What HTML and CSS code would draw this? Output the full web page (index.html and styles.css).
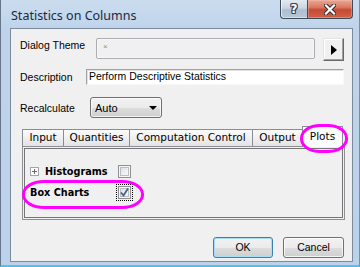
FILE: index.html
```html
<!DOCTYPE html>
<html>
<head>
<meta charset="utf-8">
<link rel="stylesheet" href="styles.css">
</head>
<body>
<div class="window">
  <div class="titlebar">
    <span class="title">Statistics on Columns</span>
    <div class="caption">
      <div class="cbtn help"><span class="q">?</span></div>
      <div class="cbtn close">
        <svg width="12" height="11" viewBox="0 0 12 11"><path d="M2 1.5 L10 9.5 M10 1.5 L2 9.5" stroke="#3a2a2a" stroke-width="4.2" stroke-linecap="square" fill="none"/><path d="M2 1.5 L10 9.5 M10 1.5 L2 9.5" stroke="#ffffff" stroke-width="2.2" stroke-linecap="square" fill="none"/></svg>
      </div>
    </div>
  </div>
  <div class="client">
    <div class="row r1">
      <span class="lbl w-theme">Dialog Theme</span>
      <div class="theme-box"><span class="x">×</span></div>
      <div class="arrow-btn"><svg width="6" height="10" viewBox="0 0 6 10"><path d="M0 0 L6 5 L0 10 Z" fill="#000"/></svg></div>
    </div>
    <div class="row r2">
      <span class="lbl w-desc">Description</span>
      <div class="desc-box">Perform Descriptive Statistics</div>
    </div>
    <div class="row r3">
      <span class="lbl w-recalc">Recalculate</span>
      <div class="combo"><span>Auto</span><svg width="8" height="4" viewBox="0 0 8 4"><path d="M0 0 L8 0 L4 4 Z" fill="#000"/></svg></div>
    </div>
    <div class="tabs">
      <div class="tab t-input">Input</div>
      <div class="tab t-quant">Quantities</div>
      <div class="tab t-comp">Computation Control</div>
      <div class="tab t-out">Output</div>
      <div class="tab sel t-plots">Plots</div>
    </div>
    <div class="panel">
      <div class="panel-inner">
        <div class="opt o1">
          <span class="expander"><svg width="9" height="9" viewBox="0 0 9 9"><rect x="0.5" y="0.5" width="8" height="8" fill="#fdfdfd" stroke="#a5a5a5"/><path d="M2 4.5 H7 M4.5 2 V7" stroke="#6d6d6d" stroke-width="1"/></svg></span>
          <span class="opt-lbl w-hist">Histograms</span>
          <span class="chk"></span>
        </div>
        <div class="opt o2">
          <span class="opt-lbl w-box">Box Charts</span>
          <span class="chk checked"><svg width="11" height="11" viewBox="0 0 11 11"><path d="M2 5.5 L4.5 8.5 L9 1.5" stroke="#4a5f8f" stroke-width="1.8" fill="none"/></svg></span>
        </div>
      </div>
    </div>
    <div class="buttons">
      <div class="btn ok">OK</div>
      <div class="btn cancel">Cancel</div>
    </div>
  </div>
  <div class="mark mark-plots"></div>
  <div class="mark mark-box"></div>
</div>
</body>
</html>
```
FILE: styles.css
```css
* { box-sizing: border-box; }
html, body { margin: 0; padding: 0; }
body {
  width: 360px; height: 267px; overflow: hidden;
  font-family: "Liberation Sans", Arial, sans-serif;
  font-size: 10.5px; color: #000;
  background: #bcd2ea;
}
.window {
  position: relative;
  width: 360px; height: 267px;
  background: linear-gradient(#cbdcef 0, #bfd4eb 28px, #bcd2ea 100%);
  border-left: 1px solid #66768a;
  border-right: 1px solid #7d8da0;
  border-bottom: 2px solid #4cc4f0;
  display: flex; flex-direction: column;
}
.titlebar {
  height: 28px; flex: none;
  display: flex; align-items: flex-start;
  padding-left: 10px;
}
.title {
  font-family: "Noto Sans", sans-serif;
  font-size: 12.5px; line-height: 17px;
  padding-top: 7px;
  color: #1b2940;
}
.caption { margin-left: auto; margin-right: 6px; display: flex; height: 19px; }
.cbtn {
  height: 19px; display: flex; align-items: center; justify-content: center;
  border: 1px solid #3f4c5c; border-top: none;
}
.help {
  width: 27px;
  border-bottom-left-radius: 4px;
  border-right: none;
  background: linear-gradient(#e2e9f1 0, #c9d5e2 45%, #aebdcf 55%, #b9c8d9 100%);
  box-shadow: inset 1px 0 0 rgba(255,255,255,.6), inset 0 -1px 0 rgba(255,255,255,.4);
}
.q {
  font-family: "DejaVu Sans", sans-serif; font-weight: bold; font-size: 12px; line-height: 12px;
  color: #fff;
  text-shadow: -1px 0 0 #3d4654, 1px 0 0 #3d4654, 0 -1px 0 #3d4654, 0 1px 0 #3d4654, 1px 1px 0 #3d4654, -1px -1px 0 #3d4654, 1px -1px 0 #3d4654, -1px 1px 0 #3d4654;
}
.close {
  width: 46px;
  border-bottom-right-radius: 4px;
  background: linear-gradient(#e9a895 0, #d97a62 40%, #c64a33 55%, #d0614a 100%);
  box-shadow: inset 0 0 0 1px rgba(255,200,190,.35);
}
.client {
  margin-left: 9px;
  width: 343px; height: 234px; flex: none;
  border: 1px solid #7b8a9c;
  background: #f0f0f0;
  display: flex; flex-direction: column;
}
.row { display: flex; padding-left: 9px; flex: none; }
.lbl { line-height: 14px; white-space: nowrap; flex: none; }
.r1 { margin-top: 9px; height: 23px; align-items: flex-start; }
.r2 { margin-top: 8px; height: 16px; align-items: center; }
.r3 { margin-top: 12px; height: 21px; align-items: center; }
.w-theme { width: 76px; }
.w-desc { width: 66px; }
.w-recalc { width: 70px; }
.theme-box {
  width: 219px; height: 21px;
  border: 1px solid #abadb3; border-radius: 2px;
  background: #f0f0f0;
  box-shadow: inset 0 0 0 1px #f7f7f7;
  padding-left: 6px;
  display: flex; align-items: center;
}
.x { font-size: 8px; color: #8a8a8a; line-height: 8px; margin-top: -4px; }
.arrow-btn {
  margin-left: 8px; width: 21px; height: 23px;
  background: #f0f0f0;
  border: 1px solid; border-color: #e3e3e3 #696969 #696969 #e3e3e3;
  box-shadow: inset -1px -1px 0 #a0a0a0, inset 1px 1px 0 #fff;
  display: flex; align-items: center; justify-content: center;
  padding-left: 1px;
}
.desc-box {
  width: 258px; height: 16px;
  background: #fff;
  border: 1px solid; border-color: #a0a0a0 #f8f8f8 #f8f8f8 #a0a0a0;
  box-shadow: inset 1px 1px 0 #e3e3e3;
  padding-left: 2px;
  line-height: 13px;
  white-space: nowrap;
}
.combo {
  width: 72px; height: 21px;
  border: 1px solid #707070; border-radius: 3px;
  background: linear-gradient(#f2f2f2 0, #ebebeb 50%, #dddddd 51%, #cfcfcf 100%);
  box-shadow: inset 0 0 0 1px rgba(255,255,255,.7);
  display: flex; align-items: center; justify-content: space-between;
  padding: 1px 4px 0 4px;
  font-size: 11px;
}
.combo svg { margin-top: -1px; }
.tabs {
  display: flex; align-items: flex-end;
  margin-top: 8px; height: 21px; padding-left: 11px;
  position: relative; z-index: 1; flex: none;
}
.tab {
  height: 17px; margin-bottom: 1px;
  border: 1px solid #898c95; border-bottom: none;
  background: linear-gradient(#fbfbfb 0, #f1f1f1 45%, #e3e3e3 100%);
  font-family: "DejaVu Sans", sans-serif; font-size: 10.5px; line-height: 15px;
  text-align: center; white-space: nowrap;
  margin-left: -1px;
}
.t-input { width: 42px; margin-left: 0; }
.t-quant { width: 67px; }
.t-comp { width: 124px; }
.t-out { width: 51px; }
.tab.sel {
  width: 41px; height: 21px; margin-bottom: 0;
  background: #fcfcfc;
  line-height: 19px;
  position: relative; z-index: 2;
}
.panel {
  margin-left: 11px; margin-top: -1px;
  width: 323px; height: 74px; flex: none;
  border: 1px solid #8e9096;
  padding: 1px;
  background: #f0f0f0;
}
.panel-inner {
  height: 100%;
  border: 1px solid #767676;
  display: flex; flex-direction: column;
}
.opt { display: flex; align-items: center; padding-left: 5px; height: 13px; }
.o1 { margin-top: 16px; }
.o2 { margin-top: 8px; }
.expander { width: 9px; height: 9px; margin-right: 6px; display: flex; }
.opt-lbl {
  font-family: "DejaVu Sans", sans-serif; font-weight: bold; font-size: 9.7px;
  line-height: 13px; white-space: nowrap;
}
.w-hist { width: 73px; }
.w-box { width: 88px; }
.chk {
  width: 13px; height: 13px;
  border: 1px solid #8e8f8f;
  background: linear-gradient(135deg, #d5d7da 0, #eef0f2 55%, #fbfbfb 100%);
  box-shadow: inset 0 0 0 1px #f6f6f6, inset 0 0 0 2px #b9bcc0;
  display: flex; align-items: center; justify-content: center;
}
.chk.checked { outline: 1px dotted #000; outline-offset: 1px; }
.buttons {
  display: flex; justify-content: flex-end; gap: 10px;
  margin-top: 17px; padding-right: 8px;
}
.btn {
  height: 21px; line-height: 19px; text-align: center;
  border: 1px solid #707070; border-radius: 3px;
  background: linear-gradient(#f2f2f2 0, #ebebeb 50%, #dddddd 51%, #cfcfcf 100%);
  box-shadow: inset 0 0 0 1px rgba(255,255,255,.75);
}
.ok { width: 60px; border-color: #3c7fb1; box-shadow: inset 0 0 0 1px #a6defa; }
.cancel { width: 61px; }
.mark {
  position: absolute;
  border: 3px solid #ff00ff;
  z-index: 5;
}
.mark-plots { left: 299px; top: 124px; width: 48px; height: 29px; border-radius: 20px / 14px; }
.mark-box { left: 21px; top: 180px; width: 122px; height: 29px; border-radius: 22px / 14px; }
```
